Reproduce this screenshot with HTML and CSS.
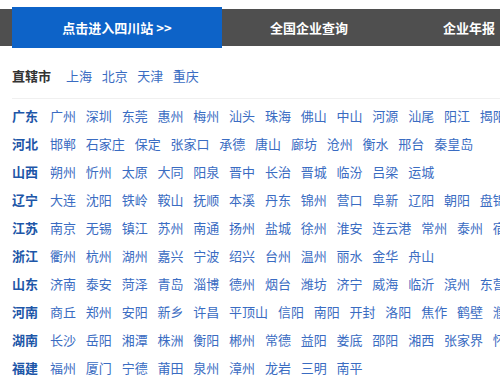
FILE: index.html
```html
<!DOCTYPE html>
<html lang="zh">
<head>
<meta charset="utf-8">
<link rel="stylesheet" href="styles.css">
</head>
<body>
<div class="nav">
  <a class="tab">点击进入四川站 &gt;&gt;</a>
  <a class="item item-a">全国企业查询</a>
  <a class="item item-b">企业年报</a>
</div>
<div class="main">
  <div class="muni">
    <span class="label">直辖市</span>
    <a>上海</a><a>北京</a><a>天津</a><a>重庆</a>
  </div>
  <div class="list">
    <div class="row"><b>广东</b><a>广州</a><a>深圳</a><a>东莞</a><a>惠州</a><a>梅州</a><a>汕头</a><a>珠海</a><a>佛山</a><a>中山</a><a>河源</a><a>汕尾</a><a>阳江</a><a>揭阳</a></div>
    <div class="row"><b>河北</b><a>邯郸</a><a>石家庄</a><a>保定</a><a>张家口</a><a>承德</a><a>唐山</a><a>廊坊</a><a>沧州</a><a>衡水</a><a>邢台</a><a>秦皇岛</a></div>
    <div class="row"><b>山西</b><a>朔州</a><a>忻州</a><a>太原</a><a>大同</a><a>阳泉</a><a>晋中</a><a>长治</a><a>晋城</a><a>临汾</a><a>吕梁</a><a>运城</a></div>
    <div class="row"><b>辽宁</b><a>大连</a><a>沈阳</a><a>铁岭</a><a>鞍山</a><a>抚顺</a><a>本溪</a><a>丹东</a><a>锦州</a><a>营口</a><a>阜新</a><a>辽阳</a><a>朝阳</a><a>盘锦</a></div>
    <div class="row"><b>江苏</b><a>南京</a><a>无锡</a><a>镇江</a><a>苏州</a><a>南通</a><a>扬州</a><a>盐城</a><a>徐州</a><a>淮安</a><a>连云港</a><a>常州</a><a>泰州</a><a>宿迁</a></div>
    <div class="row"><b>浙江</b><a>衢州</a><a>杭州</a><a>湖州</a><a>嘉兴</a><a>宁波</a><a>绍兴</a><a>台州</a><a>温州</a><a>丽水</a><a>金华</a><a>舟山</a></div>
    <div class="row"><b>山东</b><a>济南</a><a>泰安</a><a>菏泽</a><a>青岛</a><a>淄博</a><a>德州</a><a>烟台</a><a>潍坊</a><a>济宁</a><a>威海</a><a>临沂</a><a>滨州</a><a>东营</a></div>
    <div class="row"><b>河南</b><a>商丘</a><a>郑州</a><a>安阳</a><a>新乡</a><a>许昌</a><a>平顶山</a><a>信阳</a><a>南阳</a><a>开封</a><a>洛阳</a><a>焦作</a><a>鹤壁</a><a>濮阳</a></div>
    <div class="row"><b>湖南</b><a>长沙</a><a>岳阳</a><a>湘潭</a><a>株洲</a><a>衡阳</a><a>郴州</a><a>常德</a><a>益阳</a><a>娄底</a><a>邵阳</a><a>湘西</a><a>张家界</a><a>怀化</a></div>
    <div class="row"><b>福建</b><a>福州</a><a>厦门</a><a>宁德</a><a>莆田</a><a>泉州</a><a>漳州</a><a>龙岩</a><a>三明</a><a>南平</a></div>
  </div>
</div>
</body>
</html>
```
FILE: styles.css
```css
html, body {
  margin: 0;
  padding: 0;
  background: #fff;
  overflow: hidden;
}
body {
  font-family: "Microsoft YaHei", "Noto Sans CJK SC", sans-serif;
  font-size: 13px;
  width: 500px;
  height: 376px;
}
a { text-decoration: none; cursor: pointer; }

.nav {
  margin-top: 9px;
  height: 37px;
  background: #4f4f4f;
  display: flex;
  align-items: center;
  white-space: nowrap;
}
.tab {
  flex: 0 0 210px;
  height: 41px;
  margin-left: 12px;
  background: #0d63c8;
  color: #fff;
  font-weight: bold;
  display: flex;
  align-items: center;
  justify-content: center;
}
.item {
  color: #fff;
  font-weight: bold;
  flex: 0 0 auto;
}
.item-a { margin-left: 48px; }
.item-b { margin-left: 95px; }

.main {
  padding: 0 0 0 12px;
}
.muni {
  margin-top: 15px;
  height: 28px;
  display: flex;
  align-items: center;
  white-space: nowrap;
  padding-bottom: 9px;
  border-bottom: 1px solid #f0f0f0;
}
.muni .label {
  color: #333;
  font-weight: bold;
  margin-right: 15px;
}
.muni a {
  color: #3a6cc2;
  margin-right: 9.6px;
}
.list {
  padding-top: 2px;
}
.row {
  height: 28px;
  display: flex;
  align-items: center;
  white-space: nowrap;
  gap: 9.8px;
}
.row b {
  color: #1d56a8;
  font-weight: bold;
  margin-right: 2.2px;
}
.row a {
  color: #3a6cc2;
  flex: 0 0 auto;
}
```
